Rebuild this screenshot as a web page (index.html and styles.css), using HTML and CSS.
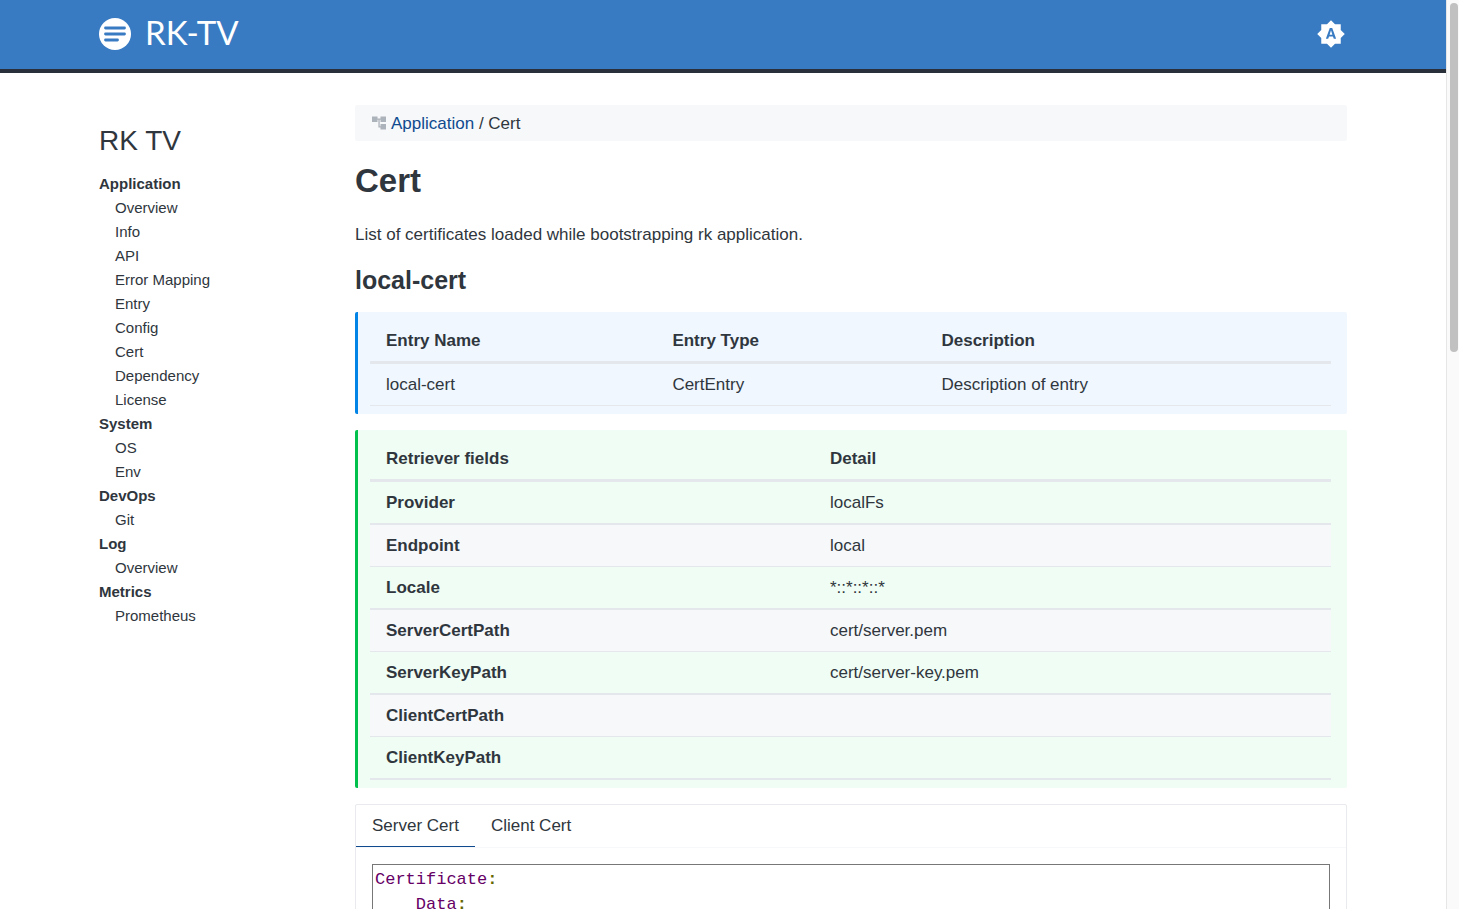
FILE: index.html
```html
<!DOCTYPE html>
<html lang="en">
<head>
<meta charset="utf-8">
<title>RK-TV</title>
<link rel="stylesheet" href="styles.css">
</head>
<body>
<div class="page">
  <header class="header">
    <div class="container header-inner">
      <a class="brand" href="#">
        <svg class="brand-icon" viewBox="0 0 32 32" aria-hidden="true">
          <circle cx="16" cy="16" r="16" fill="#fff"/>
          <path d="M6.500 10h19M6.500 16h19M6.500 22h12" stroke="#387bc2" stroke-width="2.800" stroke-linecap="round"/>
        </svg>
        <span class="brand-name">RK-TV</span>
      </a>
      <button class="theme-toggle" type="button" aria-label="Toggle theme">
        <svg viewBox="0.5 0.5 23 23" aria-hidden="true"><path fill="#fff" fill-rule="evenodd" d="M20 8.690V4h-4.690L12 .690 8.690 4H4v4.690L.690 12 4 15.310V20h4.690L12 23.310 15.310 20H20v-4.690L23.310 12zM10.850 12.650h2.300L12 9zM14.300 16l-.700-2h-3.200l-.700 2H7.800L11 7h2l3.200 9z"/></svg>
      </button>
    </div>
  </header>
  <div class="container body-grid">
    <nav class="sidebar" aria-label="Main">
      <div class="sidebar-title">RK TV</div>
      <ul class="menu">
        <li><strong>Application</strong>
          <ul>
            <li><a href="#">Overview</a></li><li><a href="#">Info</a></li><li><a href="#">API</a></li><li><a href="#">Error Mapping</a></li><li><a href="#">Entry</a></li><li><a href="#">Config</a></li><li><a href="#">Cert</a></li><li><a href="#">Dependency</a></li><li><a href="#">License</a></li>
          </ul>
        </li>
        <li><strong>System</strong>
          <ul><li><a href="#">OS</a></li><li><a href="#">Env</a></li></ul>
        </li>
        <li><strong>DevOps</strong>
          <ul><li><a href="#">Git</a></li></ul>
        </li>
        <li><strong>Log</strong>
          <ul><li><a href="#">Overview</a></li></ul>
        </li>
        <li><strong>Metrics</strong>
          <ul><li><a href="#">Prometheus</a></li></ul>
        </li>
      </ul>
    </nav>
    <main class="content">
      <div class="breadcrumb">
        <svg class="crumb-icon" viewBox="0 0 14 14" aria-hidden="true"><path fill="#adb3ba" d="M0 .5h5.500V6H0zM8.500 .5H14V6H8.500zM8.500 8H14v5.500H8.500zM5.500 2.500h3v1.200H7.700v6.500h.8v1.300H6.400V3.700h-.9z"/></svg>
        <span><a href="#">Application</a> / Cert</span>
      </div>
      <h1>Cert</h1>
      <p>List of certificates loaded while bootstrapping rk application.</p>
      <h2>local-cert</h2>
      <section class="hint hint-info">
        <table>
          <colgroup><col class="col-name"><col class="col-type"><col></colgroup>
          <thead><tr><th>Entry Name</th><th>Entry Type</th><th>Description</th></tr></thead>
          <tbody><tr class="single"><td>local-cert</td><td>CertEntry</td><td>Description of entry</td></tr></tbody>
        </table>
      </section>
      <section class="hint hint-ok">
        <table>
          <colgroup><col class="col-field"><col></colgroup>
          <thead><tr><th>Retriever fields</th><th>Detail</th></tr></thead>
          <tbody>
            <tr><th>Provider</th><td>localFs</td></tr>
            <tr><th>Endpoint</th><td>local</td></tr>
            <tr><th>Locale</th><td>*::*::*::*</td></tr>
            <tr><th>ServerCertPath</th><td>cert/server.pem</td></tr>
            <tr><th>ServerKeyPath</th><td>cert/server-key.pem</td></tr>
            <tr><th>ClientCertPath</th><td></td></tr>
            <tr><th>ClientKeyPath</th><td></td></tr>
          </tbody>
        </table>
      </section>
      <section class="tabs">
        <div class="tab-list" role="tablist">
          <button class="tab active" type="button" role="tab" aria-selected="true">Server Cert</button>
          <button class="tab" type="button" role="tab" aria-selected="false">Client Cert</button>
        </div>
        <div class="tab-panel" role="tabpanel">
<pre class="code"><span class="key">Certificate</span><span class="pun">:</span>
    <span class="key">Data</span><span class="pun">:</span></pre>
        </div>
      </section>
    </main>
  </div>
</div>
<div class="scrollbar" aria-hidden="true"><div class="thumb"></div></div>
</body>
</html>
```
FILE: styles.css
```css
* { box-sizing: border-box; }
body {
  margin: 0;
  height: 100vh;
  display: flex;
  overflow: hidden;
  background: #fff;
  color: #2f363d;
  font-family: "Liberation Sans", Arial, sans-serif;
  font-size: 17px;
  line-height: 25px;
}
a { color: inherit; text-decoration: none; }
ul { list-style: none; margin: 0; padding: 0; }
button { font: inherit; color: inherit; background: none; border: 0; padding: 0; cursor: pointer; }
.page { flex: 1; min-width: 0; overflow: hidden; }
.container { max-width: 1280px; margin: 0 auto; padding: 0 16px; }
.header { background: #387bc2; border-bottom: 4px solid #2a303a; }
.header-inner { display: flex; align-items: center; justify-content: space-between; height: 69px; padding-bottom: 2px; }
.brand { display: flex; align-items: center; gap: 14px; color: #fff; }
.brand-icon { width: 32px; height: 32px; }
.brand-name { font: 400 33px/36px Lato, sans-serif; padding-bottom: 4px; }
.theme-toggle { padding: 0 2px; }
.theme-toggle svg { display: block; width: 28px; height: 28px; }
.body-grid { display: flex; }
.sidebar { flex: 0 0 256px; padding-top: 52px; font-size: 15px; line-height: 24px; }
.sidebar-title { font-size: 28px; line-height: 32px; margin-bottom: 15px; }
.menu ul { padding-left: 16px; }
.content { flex: 1; min-width: 0; padding-top: 32px; }
.breadcrumb { display: flex; align-items: center; gap: 5px; height: 36px; padding: 0 17px; background: #f6f8fa; border-radius: 2px; }
.breadcrumb a { color: #0f4a8f; }
.crumb-icon { width: 14px; height: 14px; }
h1 { font-size: 33px; line-height: 40px; margin: 20px 0 21px; }
p { margin: 0 0 17px; }
h2 { font-size: 25px; line-height: 32px; margin: 0 0 16px; }
.hint { padding: 8px 16px 8px 12px; border-left: 3px solid; border-radius: 2px; margin-bottom: 16px; }
.hint-info { background: #f0f7fe; border-color: #0284e6; }
.hint-ok { background: #effdf4; border-color: #01c04b; }
table { width: 100%; table-layout: fixed; border-spacing: 0; }
.col-name { width: 29.800%; }
.col-type { width: 28%; }
.col-field { width: 46.200%; }
th, td { text-align: left; padding: 8px 16px; border-bottom: 2px solid #e4e8ed; height: 43px; }
thead th { border-bottom-width: 3px; height: 44px; }
tbody tr:nth-child(even) > *, .single > * { border-bottom-width: 1px; height: 42px; }
tbody tr:nth-child(even) { background: #f6f8fa; }
.tabs { border: 1px solid #e8eaed; border-radius: 2px; }
.tab-list { display: flex; border-bottom: 1px solid #f6f8fa; }
.tab { height: 42px; padding: 0 16px; border-bottom: 1px solid transparent; }
.tab.active { border-color: #0f4a8f; }
.tab-panel { padding: 16px; }
.code { margin: 0; padding: 2px; border: 1px solid #777; font: 17px/25px Courier, "Courier New", "Liberation Mono", monospace; }
.key { color: #606; }
.pun { color: #660; font-weight: 700; }
.scrollbar { flex: 0 0 13px; background: #fafafa; border-left: 1px solid #e6e6e6; padding: 3px 1px 3px 3px; }
.thumb { height: 349px; border-radius: 4px; background: #c1c1c1; }
```
